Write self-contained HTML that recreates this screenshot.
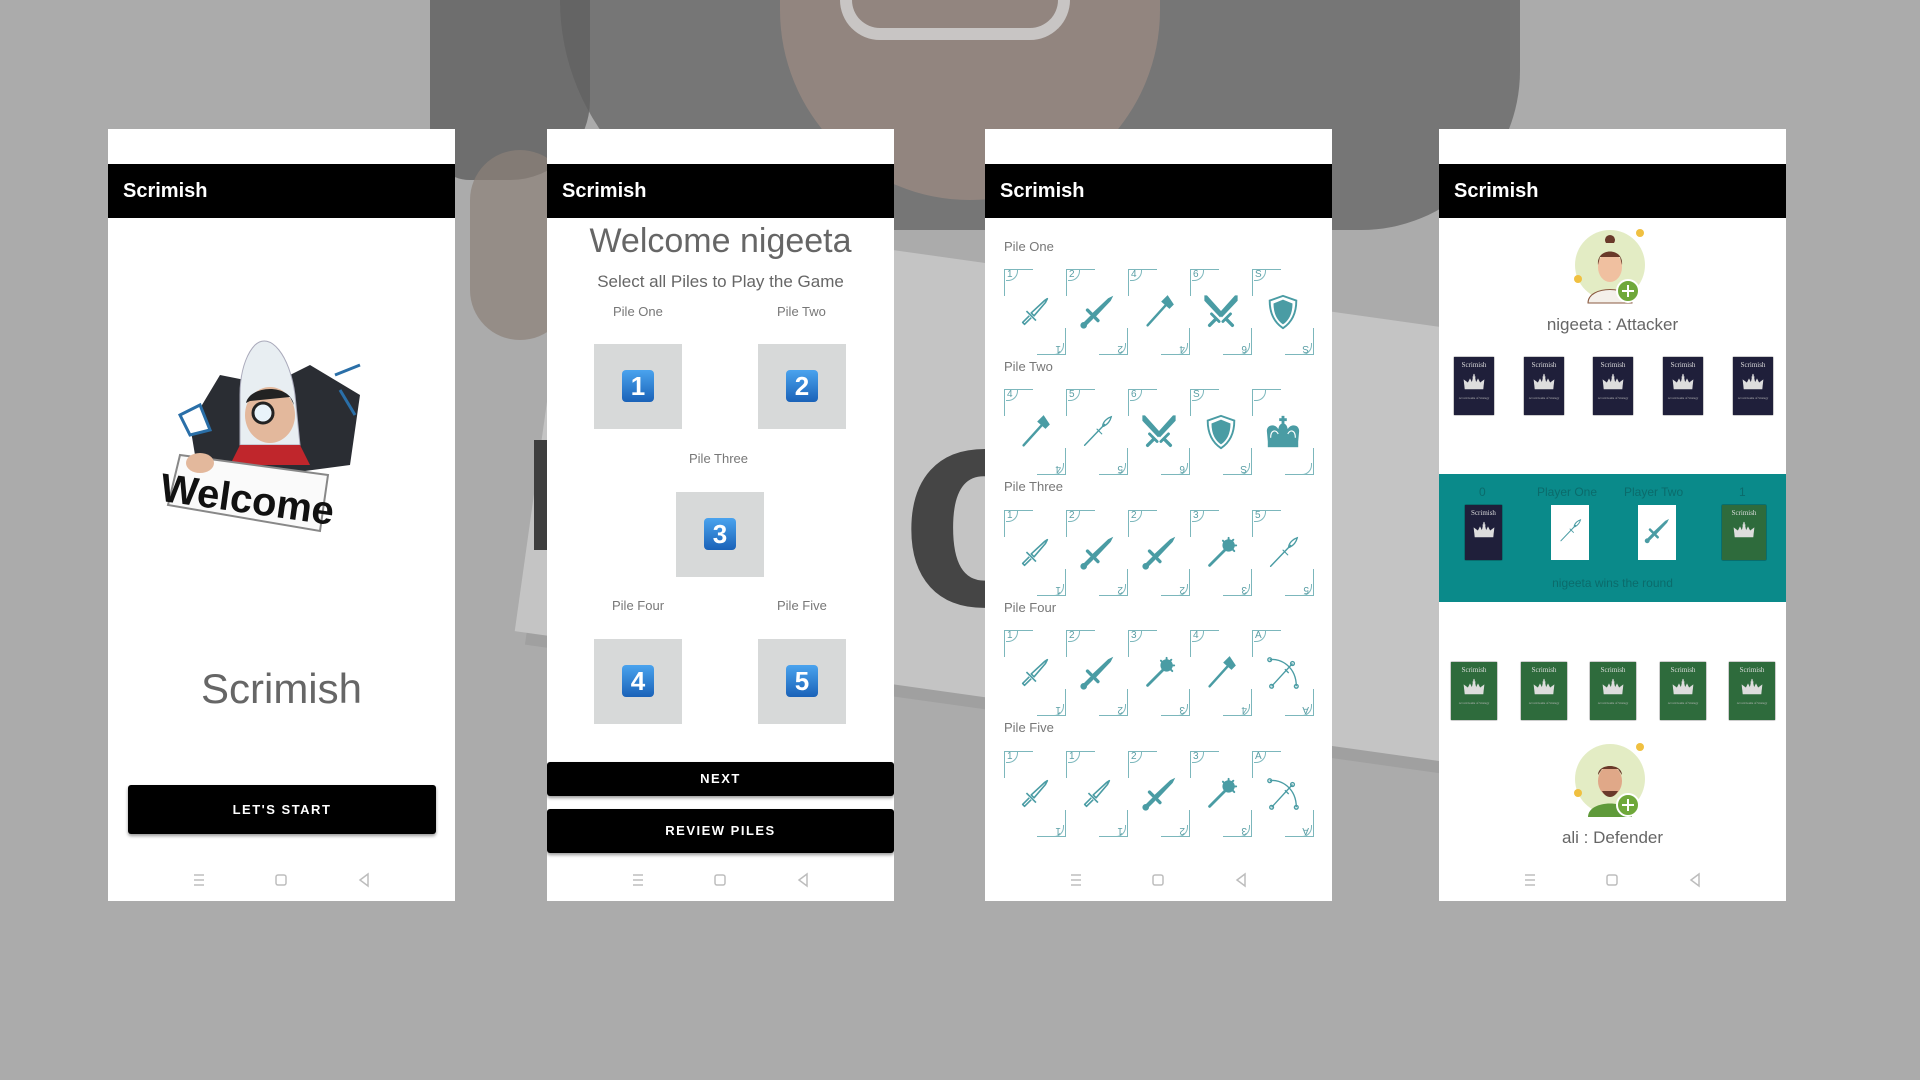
<!DOCTYPE html>
<html><head><meta charset="utf-8">
<style>
*{margin:0;padding:0;box-sizing:border-box}
body{width:1920px;height:1080px;overflow:hidden;background:#ababab;font-family:"Liberation Sans",sans-serif;position:relative}
.bg{position:absolute}
.ph{position:absolute;top:129px;width:347px;height:772px;background:#fff;overflow:hidden}
.tb{position:absolute;left:0;top:35px;width:100%;height:54px;background:#000;color:#fff;font-weight:bold;font-size:20px;line-height:54px;padding-left:15px}
.t{position:absolute;left:0;width:100%;text-align:center;color:#666}
.lbl{position:absolute;color:#777;font-size:13px}
.box{position:absolute;width:88px;height:85px;background:#d7d9d9}
.key{position:absolute;left:28px;top:26px;width:32px;height:32px;border-radius:4px;background:linear-gradient(#4aa3ee,#1a62b8);color:#fff;font-weight:bold;font-size:26px;line-height:32px;text-align:center}
.btn{position:absolute;background:#000;color:#fff;font-size:13px;font-weight:bold;letter-spacing:1.5px;text-align:center;border-radius:3px}
.c{position:absolute;width:62px;height:86px;color:#4a9ca4}
.c:before{content:"";position:absolute;left:0;top:0;width:28px;height:26px;border-top:1.5px solid #7cb7bc;border-left:1.5px solid #7cb7bc}
.c:after{content:"";position:absolute;right:0;bottom:0;width:28px;height:26px;border-bottom:1.5px solid #7cb7bc;border-right:1.5px solid #7cb7bc}
.c i{position:absolute;left:2px;top:0;font-style:normal;font-size:10px;color:#5a9ea5;width:12px;height:12px;border-right:1px solid #7cb7bc;border-bottom:1px solid #7cb7bc;border-radius:0 0 10px 0;padding-left:1px;line-height:12px}
.c b{position:absolute;right:2px;bottom:0;font-weight:normal;font-size:10px;color:#5a9ea5;width:12px;height:12px;border-left:1px solid #7cb7bc;border-top:1px solid #7cb7bc;border-radius:10px 0 0 0;transform:rotate(180deg);line-height:12px;padding-left:2px}
.c svg{position:absolute;left:12px;top:24px;width:38px;height:38px}
.sc{position:absolute;width:40px;height:58px;background:#1f1f3a;color:#ddd;font-family:"Liberation Serif",serif;font-size:7px;text-align:center;padding-top:4px;box-shadow:0 0 1px #000}
.sc.g{background:#2e6b3c;width:46px}
.sc svg{display:block;margin:4px auto 0;width:22px;height:18px}
.sc u{display:block;text-decoration:none;font-size:3px;margin-top:5px;color:#bbb}
</style></head><body>
<svg width="0" height="0" style="position:absolute">
<defs>
<symbol id="dg" viewBox="0 0 40 40"><g fill="none" stroke="#4a9ca4" stroke-width="1.7" stroke-linejoin="round"><path d="M16 21 L30 8 L33 6 L31 10 L19 24 Z"/><path d="M11 19 L21 29"/><path d="M14 24 L7 31 L9 33 L16 26"/></g></symbol>
<symbol id="sw" viewBox="0 0 40 40"><g fill="#4a9ca4" stroke="#4a9ca4" stroke-linecap="round"><path d="M15 22 L32 6 L36 4 L34 8 L18 25 Z"/><path d="M10 18 L21 29" stroke-width="3.5"/><path d="M14 26 L7 33" stroke-width="4.5"/><circle cx="6" cy="34" r="3"/></g></symbol>
<symbol id="ax" viewBox="0 0 40 40"><g fill="#4a9ca4" stroke="#4a9ca4" stroke-linecap="round"><path d="M8 34 L27 13" stroke-width="2.6"/><path d="M23 9 L29 3 L35 12 L31 16 Z"/></g></symbol>
<symbol id="xs" viewBox="0 0 40 40"><g fill="#4a9ca4" stroke="#4a9ca4" stroke-linecap="round"><path d="M5 3 L22 22 L19 25 L3 8 L3 3Z"/><path d="M35 3 L18 22 L21 25 L37 8 L37 3Z"/><path d="M10 22 L18 30 M30 22 L22 30" stroke-width="3"/><path d="M14 28 L8 34 M26 28 L32 34" stroke-width="3.5"/></g></symbol>
<symbol id="sh" viewBox="0 0 40 40"><path d="M20 3 L34 8 C34 22 29 31 20 37 C11 31 6 22 6 8 Z" fill="none" stroke="#4a9ca4" stroke-width="2"/><path d="M20 7 L30 11 C30 22 26 29 20 33 C14 29 10 22 10 11 Z" fill="#4a9ca4"/></symbol>
<symbol id="cr" viewBox="0 0 40 40"><g fill="#4a9ca4"><path d="M4 30 L3 19 C3 12 12 11 15 17 C16 12 18 11 20 11 C22 11 24 12 25 17 C28 11 37 12 37 19 L36 30 Z"/><rect x="4" y="30" width="32" height="6"/><rect x="18.5" y="3" width="3" height="9"/><rect x="16" y="5.5" width="8" height="3"/></g><path d="M7 26 C7 18 12 17 15 22 M33 26 C33 18 28 17 25 22" stroke="#fff" stroke-width="1.2" fill="none"/></symbol>
<symbol id="sp" viewBox="0 0 40 40"><g stroke="#4a9ca4" fill="none" stroke-linecap="round"><path d="M7 34 L28 12" stroke-width="1.5"/><path d="M26 13 C27 8 32 5 35 4 C34 8 31 12 27 14 Z" stroke-width="1.4"/><path d="M20 17 L25 22" stroke-width="1.2"/></g></symbol>
<symbol id="mc" viewBox="0 0 40 40"><g fill="#4a9ca4" stroke="#4a9ca4" stroke-linecap="round"><path d="M8 33 L24 17" stroke-width="3"/><circle cx="28" cy="12" r="6"/><path d="M28 4 v3 M36 12 h-3 M33 6 l-2 2 M22 7 l2 2 M34 18 l-2 -2" stroke-width="2"/></g></symbol>
<symbol id="bw" viewBox="0 0 40 40"><g stroke="#4a9ca4" fill="none" stroke-width="1.4"><path d="M6 6 C18 4 34 14 34 34"/><path d="M8 34 L30 10"/><circle cx="6" cy="6" r="2"/><circle cx="34" cy="34" r="2"/><circle cx="8" cy="34" r="2"/><circle cx="30" cy="10" r="2"/><path d="M22 16 L26 20"/></g></symbol>
<symbol id="crw" viewBox="0 0 22 18"><path d="M2 16 L1 7 L5 10 L7 6 L9 10 L11 1 L13 10 L15 6 L17 10 L21 7 L20 16Z M10 2 h2 M9 4 h4" fill="#ddd" stroke="#ddd" stroke-width=".6"/></symbol>
</defs></svg>

<!-- background cartoon (faded) -->
<div class="bg" style="left:540px;top:270px;width:960px;height:430px;background:#c4c4c4;transform:rotate(8deg);box-shadow:12px 12px 0 #a0a0a0"></div>
<div class="bg" style="left:430px;top:0;width:160px;height:180px;background:#5a5a5a;border-radius:0 0 80px 40px;opacity:.75"></div>
<div class="bg" style="left:560px;top:0;width:960px;height:230px;background:#606060;border-radius:0 0 180px 260px;opacity:.7"></div>
<div class="bg" style="left:780px;top:0;width:380px;height:200px;background:#9a8a82;border-radius:0 0 200px 200px;opacity:.8"></div>
<div class="bg" style="left:840px;top:0;width:230px;height:40px;border:12px solid #d6d6d6;border-top:none;border-radius:0 0 110px 110px;opacity:.8"></div>
<div class="bg" style="left:470px;top:150px;width:100px;height:190px;background:#8c8078;border-radius:50px;opacity:.7"></div>
<div class="bg" style="left:534px;top:440px;width:36px;height:110px;background:#3e3e3e"></div>
<div class="bg" style="left:900px;top:360px;font-size:290px;font-weight:bold;color:#454545;line-height:1">co</div>

<!-- Phone 1 -->
<div class="ph" style="left:108px">
<div class="tb">Scrimish</div>
<svg style="position:absolute;left:52px;top:206px" width="224" height="216" viewBox="0 0 224 216">
<path d="M30 90 L60 40 L110 50 L150 30 L200 60 L190 130 L40 150Z" fill="#2a2d33"/>
<path d="M20 80 L40 70 L50 95 L30 100Z M175 40 L200 30 M180 55 L195 80" fill="#fff" stroke="#2a6fa8" stroke-width="3"/>
<path d="M95 10 C110 -4 130 20 135 60 L140 110 L80 110 L80 60 C80 30 90 15 95 10Z" fill="#e8eef2" stroke="#aab"/>
<ellipse cx="110" cy="80" rx="25" ry="28" fill="#e3b89c"/>
<path d="M86 68 C90 50 130 48 134 70 L130 62 L90 66Z" fill="#222"/>
<circle cx="103" cy="78" r="10" fill="#e9f3fa" stroke="#222" stroke-width="3"/>
<path d="M70 130 L150 130 L140 110 L80 110Z" fill="#c0262c"/>
<path d="M8 170 L20 120 L168 140 L160 196Z" fill="#fafafa" stroke="#888" stroke-width="2"/>
<text x="88" y="178" transform="rotate(8 88 160)" text-anchor="middle" font-family="Liberation Sans" font-weight="bold" font-size="40" fill="#111">Welcome</text>
<ellipse cx="40" cy="128" rx="14" ry="10" fill="#e3b89c"/>
</svg>
<div class="t" style="top:536px;font-size:42px">Scrimish</div>
<div class="btn" style="left:20px;top:656px;width:308px;height:49px;line-height:49px;box-shadow:0 2px 3px #999">LET'S START</div>
</div>

<!-- Phone 2 -->
<div class="ph" style="left:547px">
<div class="tb">Scrimish</div>
<div class="t" style="top:93px;font-size:34px">Welcome nigeeta</div>
<div class="t" style="top:143px;font-size:17px">Select all Piles to Play the Game</div>
<div class="lbl" style="left:66px;top:175px">Pile One</div>
<div class="lbl" style="left:230px;top:175px">Pile Two</div>
<div class="box" style="left:47px;top:215px"><div class="key">1</div></div>
<div class="box" style="left:211px;top:215px"><div class="key">2</div></div>
<div class="lbl" style="left:142px;top:322px">Pile Three</div>
<div class="box" style="left:129px;top:363px"><div class="key">3</div></div>
<div class="lbl" style="left:65px;top:469px">Pile Four</div>
<div class="lbl" style="left:230px;top:469px">Pile Five</div>
<div class="box" style="left:47px;top:510px"><div class="key">4</div></div>
<div class="box" style="left:211px;top:510px"><div class="key">5</div></div>
<div class="btn" style="left:0;top:633px;width:347px;height:34px;line-height:34px;box-shadow:0 2px 3px #999">NEXT</div>
<div class="btn" style="left:0;top:680px;width:347px;height:44px;line-height:44px;box-shadow:0 2px 3px #999">REVIEW PILES</div>
</div>

<!-- Phone 3 -->
<div class="ph" style="left:985px">
<div class="tb">Scrimish</div>
<div class="lbl" style="left:19px;top:110px">Pile One</div>
<div class="c" style="left:19px;top:140px"><i>1</i><b>1</b><svg><use href="#dg"/></svg></div>
<div class="c" style="left:81px;top:140px"><i>2</i><b>2</b><svg><use href="#sw"/></svg></div>
<div class="c" style="left:143px;top:140px"><i>4</i><b>4</b><svg><use href="#ax"/></svg></div>
<div class="c" style="left:205px;top:140px"><i>6</i><b>6</b><svg><use href="#xs"/></svg></div>
<div class="c" style="left:267px;top:140px"><i>S</i><b>S</b><svg><use href="#sh"/></svg></div>
<div class="lbl" style="left:19px;top:230px">Pile Two</div>
<div class="c" style="left:19px;top:260px"><i>4</i><b>4</b><svg><use href="#ax"/></svg></div>
<div class="c" style="left:81px;top:260px"><i>5</i><b>5</b><svg><use href="#sp"/></svg></div>
<div class="c" style="left:143px;top:260px"><i>6</i><b>6</b><svg><use href="#xs"/></svg></div>
<div class="c" style="left:205px;top:260px"><i>S</i><b>S</b><svg><use href="#sh"/></svg></div>
<div class="c" style="left:267px;top:260px"><i></i><b></b><svg><use href="#cr"/></svg></div>
<div class="lbl" style="left:19px;top:350px">Pile Three</div>
<div class="c" style="left:19px;top:381px"><i>1</i><b>1</b><svg><use href="#dg"/></svg></div>
<div class="c" style="left:81px;top:381px"><i>2</i><b>2</b><svg><use href="#sw"/></svg></div>
<div class="c" style="left:143px;top:381px"><i>2</i><b>2</b><svg><use href="#sw"/></svg></div>
<div class="c" style="left:205px;top:381px"><i>3</i><b>3</b><svg><use href="#mc"/></svg></div>
<div class="c" style="left:267px;top:381px"><i>5</i><b>5</b><svg><use href="#sp"/></svg></div>
<div class="lbl" style="left:19px;top:471px">Pile Four</div>
<div class="c" style="left:19px;top:501px"><i>1</i><b>1</b><svg><use href="#dg"/></svg></div>
<div class="c" style="left:81px;top:501px"><i>2</i><b>2</b><svg><use href="#sw"/></svg></div>
<div class="c" style="left:143px;top:501px"><i>3</i><b>3</b><svg><use href="#mc"/></svg></div>
<div class="c" style="left:205px;top:501px"><i>4</i><b>4</b><svg><use href="#ax"/></svg></div>
<div class="c" style="left:267px;top:501px"><i>A</i><b>A</b><svg><use href="#bw"/></svg></div>
<div class="lbl" style="left:19px;top:591px">Pile Five</div>
<div class="c" style="left:19px;top:622px"><i>1</i><b>1</b><svg><use href="#dg"/></svg></div>
<div class="c" style="left:81px;top:622px"><i>1</i><b>1</b><svg><use href="#dg"/></svg></div>
<div class="c" style="left:143px;top:622px"><i>2</i><b>2</b><svg><use href="#sw"/></svg></div>
<div class="c" style="left:205px;top:622px"><i>3</i><b>3</b><svg><use href="#mc"/></svg></div>
<div class="c" style="left:267px;top:622px"><i>A</i><b>A</b><svg><use href="#bw"/></svg></div>
</div>

<!-- Phone 4 -->
<div class="ph" style="left:1439px">
<div class="tb">Scrimish</div>
<svg style="position:absolute;left:133px;top:96px" width="84" height="84" viewBox="0 0 84 84">
<circle cx="38" cy="40" r="35" fill="#e3ecc4"/><circle cx="68" cy="8" r="4" fill="#f0c040"/><circle cx="6" cy="54" r="4" fill="#f0c040"/>
<path d="M16 78 C16 60 60 60 60 78Z" fill="#f4f0ea" stroke="#8a5a40"/>
<ellipse cx="38" cy="42" rx="12" ry="15" fill="#f0c0a0"/>
<path d="M26 40 C24 22 52 22 50 40 L48 32 L28 32Z M34 18 a5 5 0 1 1 8 0Z" fill="#6a3a2a"/>
<circle cx="56" cy="66" r="11" fill="#6fa83a" stroke="#fff" stroke-width="2"/><path d="M56 60 v12 M50 66 h12" stroke="#fff" stroke-width="2"/>
</svg>
<div class="t" style="top:186px;font-size:17px">nigeeta : Attacker</div>
<div class="sc" style="left:15px;top:228px">Scrimish<svg><use href="#crw"/></svg><u>A Card Game of Strategy</u></div>
<div class="sc" style="left:85px;top:228px">Scrimish<svg><use href="#crw"/></svg><u>A Card Game of Strategy</u></div>
<div class="sc" style="left:154px;top:228px">Scrimish<svg><use href="#crw"/></svg><u>A Card Game of Strategy</u></div>
<div class="sc" style="left:224px;top:228px">Scrimish<svg><use href="#crw"/></svg><u>A Card Game of Strategy</u></div>
<div class="sc" style="left:294px;top:228px">Scrimish<svg><use href="#crw"/></svg><u>A Card Game of Strategy</u></div>
<div style="position:absolute;left:0;top:345px;width:347px;height:128px;background:#0a8a8a">
<div style="position:absolute;top:11px;left:0;width:100%;font-size:12px;color:#0b6b6b">
<span style="position:absolute;left:40px">0</span><span style="position:absolute;left:98px">Player One</span><span style="position:absolute;left:185px">Player Two</span><span style="position:absolute;left:300px">1</span></div>
<div class="sc" style="left:26px;top:31px;width:37px;height:55px">Scrimish<svg><use href="#crw"/></svg></div>
<div style="position:absolute;left:112px;top:31px;width:38px;height:55px;background:#fff"><svg style="position:absolute;left:5px;top:12px;width:28px;height:28px"><use href="#sp"/></svg></div>
<div style="position:absolute;left:199px;top:31px;width:38px;height:55px;background:#fff"><svg style="position:absolute;left:5px;top:12px;width:28px;height:28px"><use href="#sw"/></svg></div>
<div class="sc g" style="left:283px;top:31px;width:44px;height:55px">Scrimish<svg><use href="#crw"/></svg></div>
<div style="position:absolute;top:102px;width:100%;text-align:center;font-size:12px;color:#0b6b6b">nigeeta wins the round</div>
</div>
<div class="sc g" style="left:12px;top:533px">Scrimish<svg><use href="#crw"/></svg><u>A Card Game of Strategy</u></div>
<div class="sc g" style="left:82px;top:533px">Scrimish<svg><use href="#crw"/></svg><u>A Card Game of Strategy</u></div>
<div class="sc g" style="left:151px;top:533px">Scrimish<svg><use href="#crw"/></svg><u>A Card Game of Strategy</u></div>
<div class="sc g" style="left:221px;top:533px">Scrimish<svg><use href="#crw"/></svg><u>A Card Game of Strategy</u></div>
<div class="sc g" style="left:290px;top:533px">Scrimish<svg><use href="#crw"/></svg><u>A Card Game of Strategy</u></div>
<svg style="position:absolute;left:133px;top:610px" width="84" height="84" viewBox="0 0 84 84">
<circle cx="38" cy="40" r="35" fill="#e3ecc4"/><circle cx="68" cy="8" r="4" fill="#f0c040"/><circle cx="6" cy="54" r="4" fill="#f0c040"/>
<path d="M16 78 C16 60 60 60 60 78Z" fill="#5f9a3a"/>
<ellipse cx="38" cy="42" rx="12" ry="15" fill="#e0a888"/>
<path d="M26 36 C26 24 50 24 50 36 L46 30 L30 30Z" fill="#6a3a2a"/><path d="M30 52 C34 60 42 60 46 52" fill="#6a3a2a"/>
<circle cx="56" cy="66" r="11" fill="#6fa83a" stroke="#fff" stroke-width="2"/><path d="M56 60 v12 M50 66 h12" stroke="#fff" stroke-width="2"/>
</svg>
<div class="t" style="top:699px;font-size:17px">ali : Defender</div>
</div>

<svg style="position:absolute;left:0;top:0" width="1920" height="1080">
<g fill="none" stroke="#bdbdbd" stroke-width="1.5">
<g transform="translate(108,0)"><path d="M86 875h10M86 880h10M86 885h10"/><rect x="168" y="875" width="10" height="10" rx="2"/><path d="M260 874 L252 880 L260 886Z"/></g>
<g transform="translate(547,0)"><path d="M86 875h10M86 880h10M86 885h10"/><rect x="168" y="875" width="10" height="10" rx="2"/><path d="M260 874 L252 880 L260 886Z"/></g>
<g transform="translate(985,0)"><path d="M86 875h10M86 880h10M86 885h10"/><rect x="168" y="875" width="10" height="10" rx="2"/><path d="M260 874 L252 880 L260 886Z"/></g>
<g transform="translate(1439,0)"><path d="M86 875h10M86 880h10M86 885h10"/><rect x="168" y="875" width="10" height="10" rx="2"/><path d="M260 874 L252 880 L260 886Z"/></g>
</g></svg>
</body></html>
